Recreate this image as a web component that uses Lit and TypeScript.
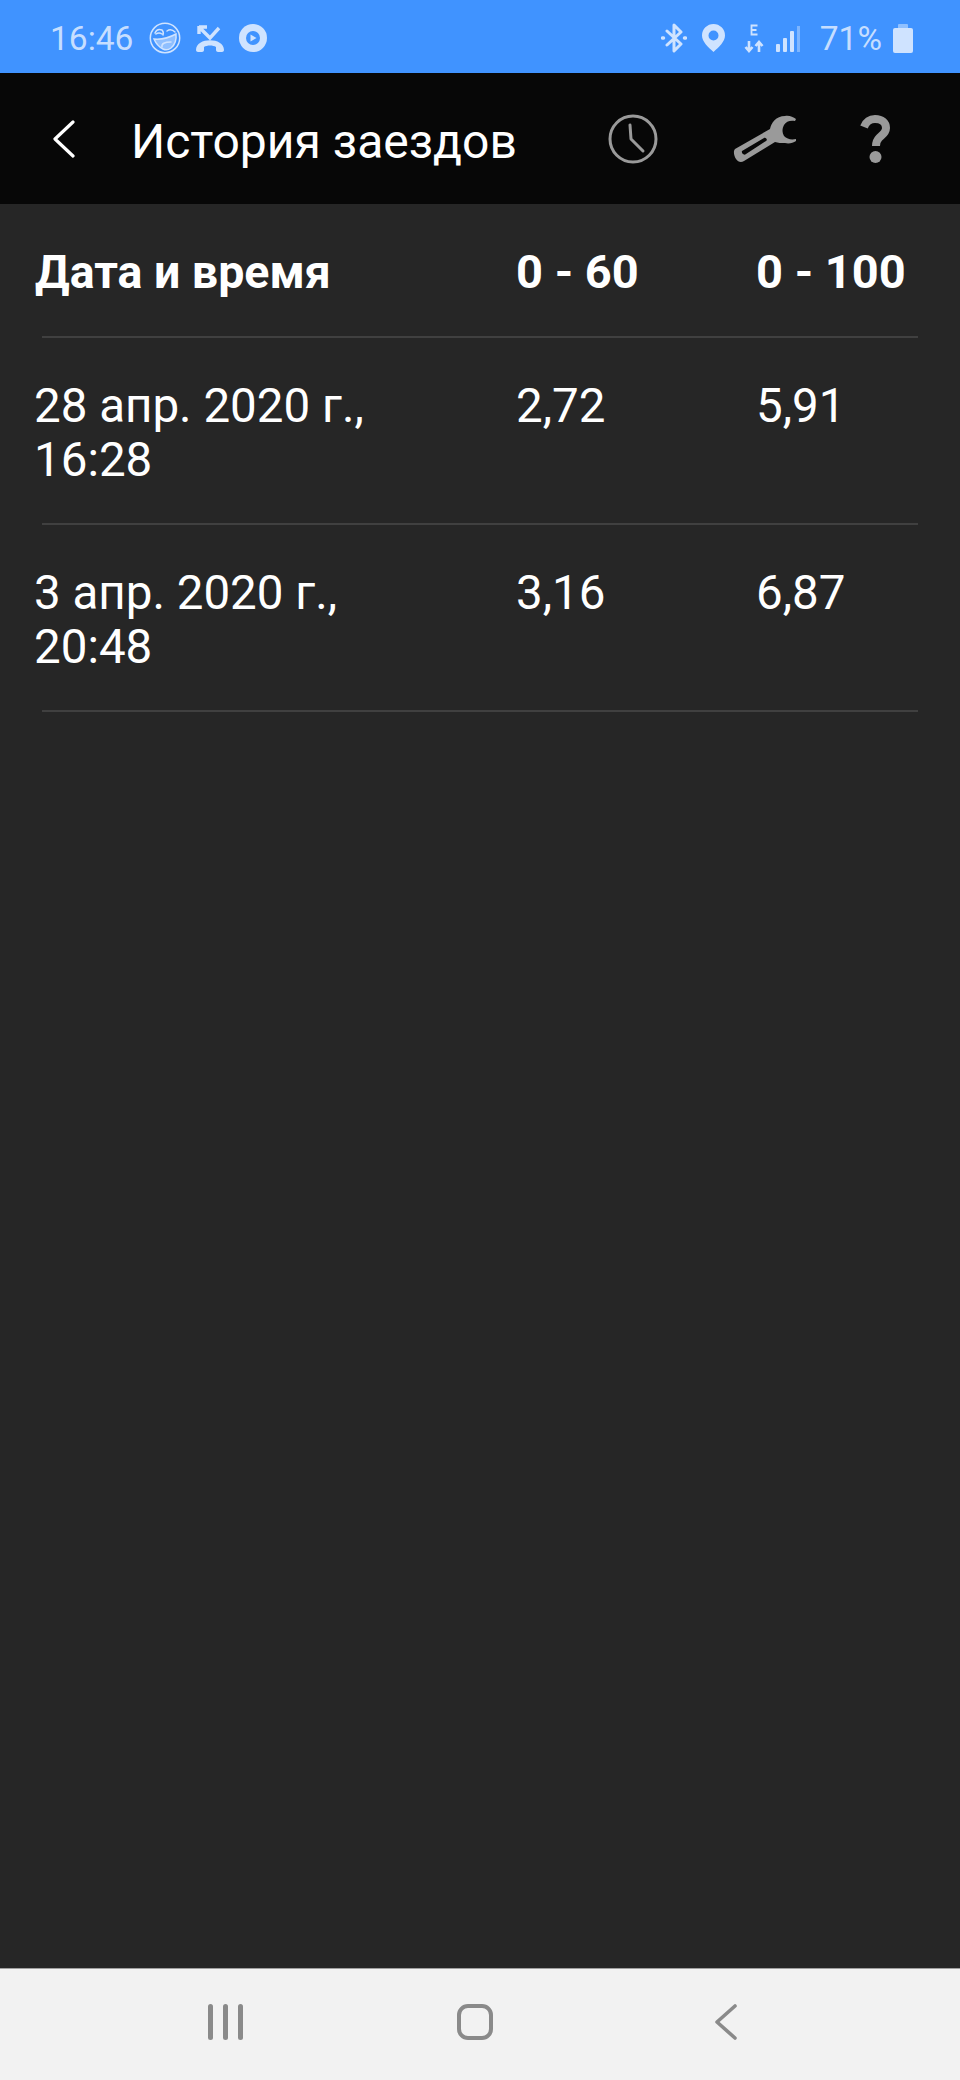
import { LitElement, css, html, svg } from "lit";
import { customElement } from "lit/decorators.js";

const rows = [
  { date: "28 апр. 2020 г.,", time: "16:28", a: "2,72", b: "5,91" },
  { date: "3 апр. 2020 г.,", time: "20:48", a: "3,16", b: "6,87" },
];

const faceIcon = svg`<svg class="ic" width="32" height="32" viewBox="0 0 32 32" fill="none" stroke="#cfe3ff" stroke-width="1.5" stroke-linecap="round">
  <circle cx="16" cy="16" r="14.7" />
  <path d="M5 17q11 1 22-5q1 9-5 14q-4 3-8 1q-6-3-9-10z" fill="#cfe3ff" fill-opacity=".55" />
  <path d="M6 11q2-5 7-3q2 2 1 5M7 12q3-2 6 0M18 9q4-3 8 1" />
  <path d="M13 25q-1-5 9-5" />
</svg>`;

const callIcon = svg`<svg class="ic" width="28" height="27" viewBox="0 0 28 27" fill="none" stroke="#cfe3ff" stroke-linecap="butt" stroke-linejoin="miter">
  <path d="M4 3l10 10L23 3M3 2h8M3 1v8" stroke-width="3.400" />
  <path d="M0 25c0-13 28-13 28 0 0 1-1 2-2 2h-4c-1 0-2-1-2-2v-3c-3-2-9-2-12 0v3c0 1-1 2-2 2H2c-1 0-2-1-2-2z" fill="#cfe3ff" stroke="none" />
</svg>`;

const playIcon = svg`<svg class="ic" width="28" height="28" viewBox="0 0 28 28">
  <circle cx="14" cy="14" r="14" fill="#cfe3ff" />
  <circle cx="14" cy="14" r="7" fill="#4093ff" />
  <path d="M11.500 10.500l6 3.500-6 3.500z" fill="#cfe3ff" />
</svg>`;

const btIcon = svg`<svg class="ic" width="26" height="30" viewBox="0 0 26 30" fill="none" stroke="#cfe3ff" stroke-width="3" stroke-linecap="round" stroke-linejoin="round">
  <path d="M6 8l14 13-7 7V2l7 7L6 22" />
  <path d="M1.500 15h1M23.500 15h1" stroke-width="3.500" />
</svg>`;

const pinIcon = svg`<svg class="ic" width="23" height="28" viewBox="0 0 23 28">
  <path fill-rule="evenodd" fill="#cfe3ff" d="M11.500 0a11.500 11.500 0 0 1 11.500 11.500c0 6-6 11.500-11.500 16.500C6 23 0 17.500 0 11.500A11.500 11.500 0 0 1 11.500 0zm0 6.500a5 5 0 1 0 0 10 5 5 0 0 0 0-10z" />
</svg>`;

const dataIcon = svg`<svg class="ic" width="20" height="29" viewBox="0 0 20 29" fill="none" stroke="#cfe3ff" stroke-width="2.600">
  <path d="M13.500 1.500H7.500v9h6M7.500 6h5" stroke-width="1.800" />
  <path d="M5 17v10M1.500 23L5 27l3.500-4M15 28V18M11.500 22L15 18l3.500 4" />
</svg>`;

const signalIcon = svg`<svg class="ic" width="25" height="27" viewBox="0 0 25 27">
  <rect x="0" y="19" width="4" height="8" rx="1" fill="#cfe3ff" />
  <rect x="7" y="13" width="4" height="14" rx="1" fill="#cfe3ff" />
  <rect x="14" y="6" width="4" height="21" rx="1" fill="#cfe3ff" />
  <rect x="21" y="1" width="3" height="26" fill="#7eb6ff" />
</svg>`;

const batteryIcon = svg`<svg class="ic" width="20" height="29" viewBox="0 0 20 29">
  <rect x="5" y="0" width="10" height="5" rx="1" fill="#8fc0ff" />
  <rect x="0" y="4" width="20" height="25" rx="2" fill="#cfe3ff" />
</svg>`;

const backIcon = svg`<svg width="24" height="38" viewBox="0 0 24 38" fill="none" stroke="#fff" stroke-width="3.200" stroke-linecap="round" stroke-linejoin="round">
  <path d="M21 2L3 19l18 17" />
</svg>`;

const clockIcon = svg`<svg width="50" height="50" viewBox="0 0 50 50" fill="none" stroke="#9a9a9a" stroke-width="3">
  <circle cx="25" cy="25" r="23" />
  <path d="M22 11l1 14 12 12" stroke-linecap="round" stroke-linejoin="round" />
</svg>`;

const wrenchIcon = svg`<svg width="64" height="48" viewBox="0 0 64 48">
  <path fill="#9a9a9a" fill-rule="evenodd" d="M2 34L37 14C38 8 43 1 52 1c4-1 8 1 11 3l-1 2c-4-1-9 0-11 4-2 4-2 7 0 11 3 3 7 4 12 3v2c-3 2-7 3-11 2-4 0-7 0-10-1L11 46c-3 2-6 1-8-2-2-3-3-8-1-10zm7 2c-1 2 2 5 4 3l20-13c2-1 0-4-2-3z" />
</svg>`;

const helpIcon = svg`<svg width="30" height="48" viewBox="0 0 30 48" fill="none">
  <path d="M4 12C6 7 10 4 15 4c7 0 11 4 11 9 0 5-4 7-7 10-2 2-3 4-3 8" stroke="#9a9a9a" stroke-width="8" />
  <circle cx="15.500" cy="42" r="6" fill="#9a9a9a" />
</svg>`;

const navBack = svg`<svg width="24" height="38" viewBox="0 0 24 38" fill="none" stroke="#8a8a8a" stroke-width="3.600" stroke-linecap="round" stroke-linejoin="round">
  <path d="M21 3L3 19l18 16" />
</svg>`;

@customElement("app-root")
export class AppRoot extends LitElement {
  static styles = css`
    :host {
      display: block;
      width: 960px;
      height: 2080px;
      background: #262626;
      font-family: Roboto, "Liberation Sans", sans-serif;
      color: #fff;
    }

    .screen {
      display: flex;
      flex-direction: column;
      height: 2080px;
    }

    .status {
      height: 73px;
      flex: none;
      background: #4093ff;
      color: #c6deff;
      display: flex;
      align-items: center;
      justify-content: space-between;
      padding: 3px 47px 0 50px;
      box-sizing: border-box;
      font-size: 33.5px;
    }

    .status-left,
    .status-right {
      display: flex;
      align-items: center;
    }

    .status-left {
      gap: 15px;
    }

    .status-right {
      gap: 12px;
    }

    .status-left .time {
      margin-right: 1px;
    }

    .status-right .pin {
      margin-left: 3px;
    }

    .status-right .data {
      margin-left: 7px;
    }

    .status-right .pct {
      margin-left: 7px;
      margin-right: -1px;
    }

    .ic {
      display: block;
    }

    .appbar {
      height: 131px;
      flex: none;
      background: #070707;
      display: flex;
      align-items: center;
      padding: 0 70px 0 52px;
      box-sizing: border-box;
    }

    .back {
      width: 24px;
      display: flex;
      margin-right: 55px;
    }

    .title {
      font-size: 48px;
      flex: 1;
      margin-top: 6px;
    }

    .tools {
      display: flex;
      align-items: center;
    }

    .tools svg {
      display: block;
    }

    .tools .clock {
      margin-right: 75px;
    }

    .tools .wrench {
      margin-right: 63px;
    }

    .content {
      flex: 1;
      padding: 0 42px;
    }

    .row {
      display: grid;
      grid-template-columns: 474px 240px 1fr;
      border-bottom: 2px solid #404040;
      height: 187px;
      box-sizing: border-box;
      padding-top: 41px;
      font-size: 47.5px;
      line-height: 54px;
    }

    .row.head {
      height: 134px;
      font-size: 47px;
      font-weight: 700;
      padding-top: 41px;
    }

    .cell-first {
      margin-left: -8px;
    }

    .head .cell-first {
      margin-left: -7px;
      font-size: 46.5px;
    }

    .navbar {
      height: 112px;
      flex: none;
      background: #f2f2f2;
      border-top: 1px solid #a0a0a0;
      box-sizing: border-box;
      display: flex;
      align-items: center;
      padding: 0 0 5px 208px;
    }

    .recents {
      width: 35px;
      height: 36px;
      display: flex;
      justify-content: space-between;
    }

    .recents span {
      width: 5px;
      border-radius: 3px;
      background: #8a8a8a;
    }

    .home {
      width: 36px;
      height: 36px;
      box-sizing: border-box;
      border: 4px solid #8a8a8a;
      border-radius: 11px;
      margin-left: 214px;
    }

    .nav-back {
      display: flex;
      margin-left: 221px;
    }
  `;

  render() {
    return html`<div class="screen">
      <div class="status">
        <div class="status-left">
          <span class="time">16:46</span>
          ${faceIcon} ${callIcon} ${playIcon}
        </div>
        <div class="status-right">
          ${btIcon}
          <span class="pin">${pinIcon}</span>
          <span class="data">${dataIcon}</span>
          ${signalIcon}
          <span class="pct">71%</span>
          ${batteryIcon}
        </div>
      </div>
      <div class="appbar">
        <div class="back">${backIcon}</div>
        <div class="title">История заездов</div>
        <div class="tools">
          <span class="clock">${clockIcon}</span>
          <span class="wrench">${wrenchIcon}</span>
          <span>${helpIcon}</span>
        </div>
      </div>
      <div class="content">
        <div class="row head">
          <div class="cell-first">Дата и время</div>
          <div>0 - 60</div>
          <div>0 - 100</div>
        </div>
        ${rows.map(
          (r) => html`<div class="row">
            <div class="cell-first">${r.date}<br />${r.time}</div>
            <div>${r.a}</div>
            <div>${r.b}</div>
          </div>`
        )}
      </div>
      <div class="navbar">
        <div class="recents"><span></span><span></span><span></span></div>
        <div class="home"></div>
        <div class="nav-back">${navBack}</div>
      </div>
    </div>`;
  }
}

declare global {
  interface HTMLElementTagNameMap {
    "app-root": AppRoot;
  }
}
